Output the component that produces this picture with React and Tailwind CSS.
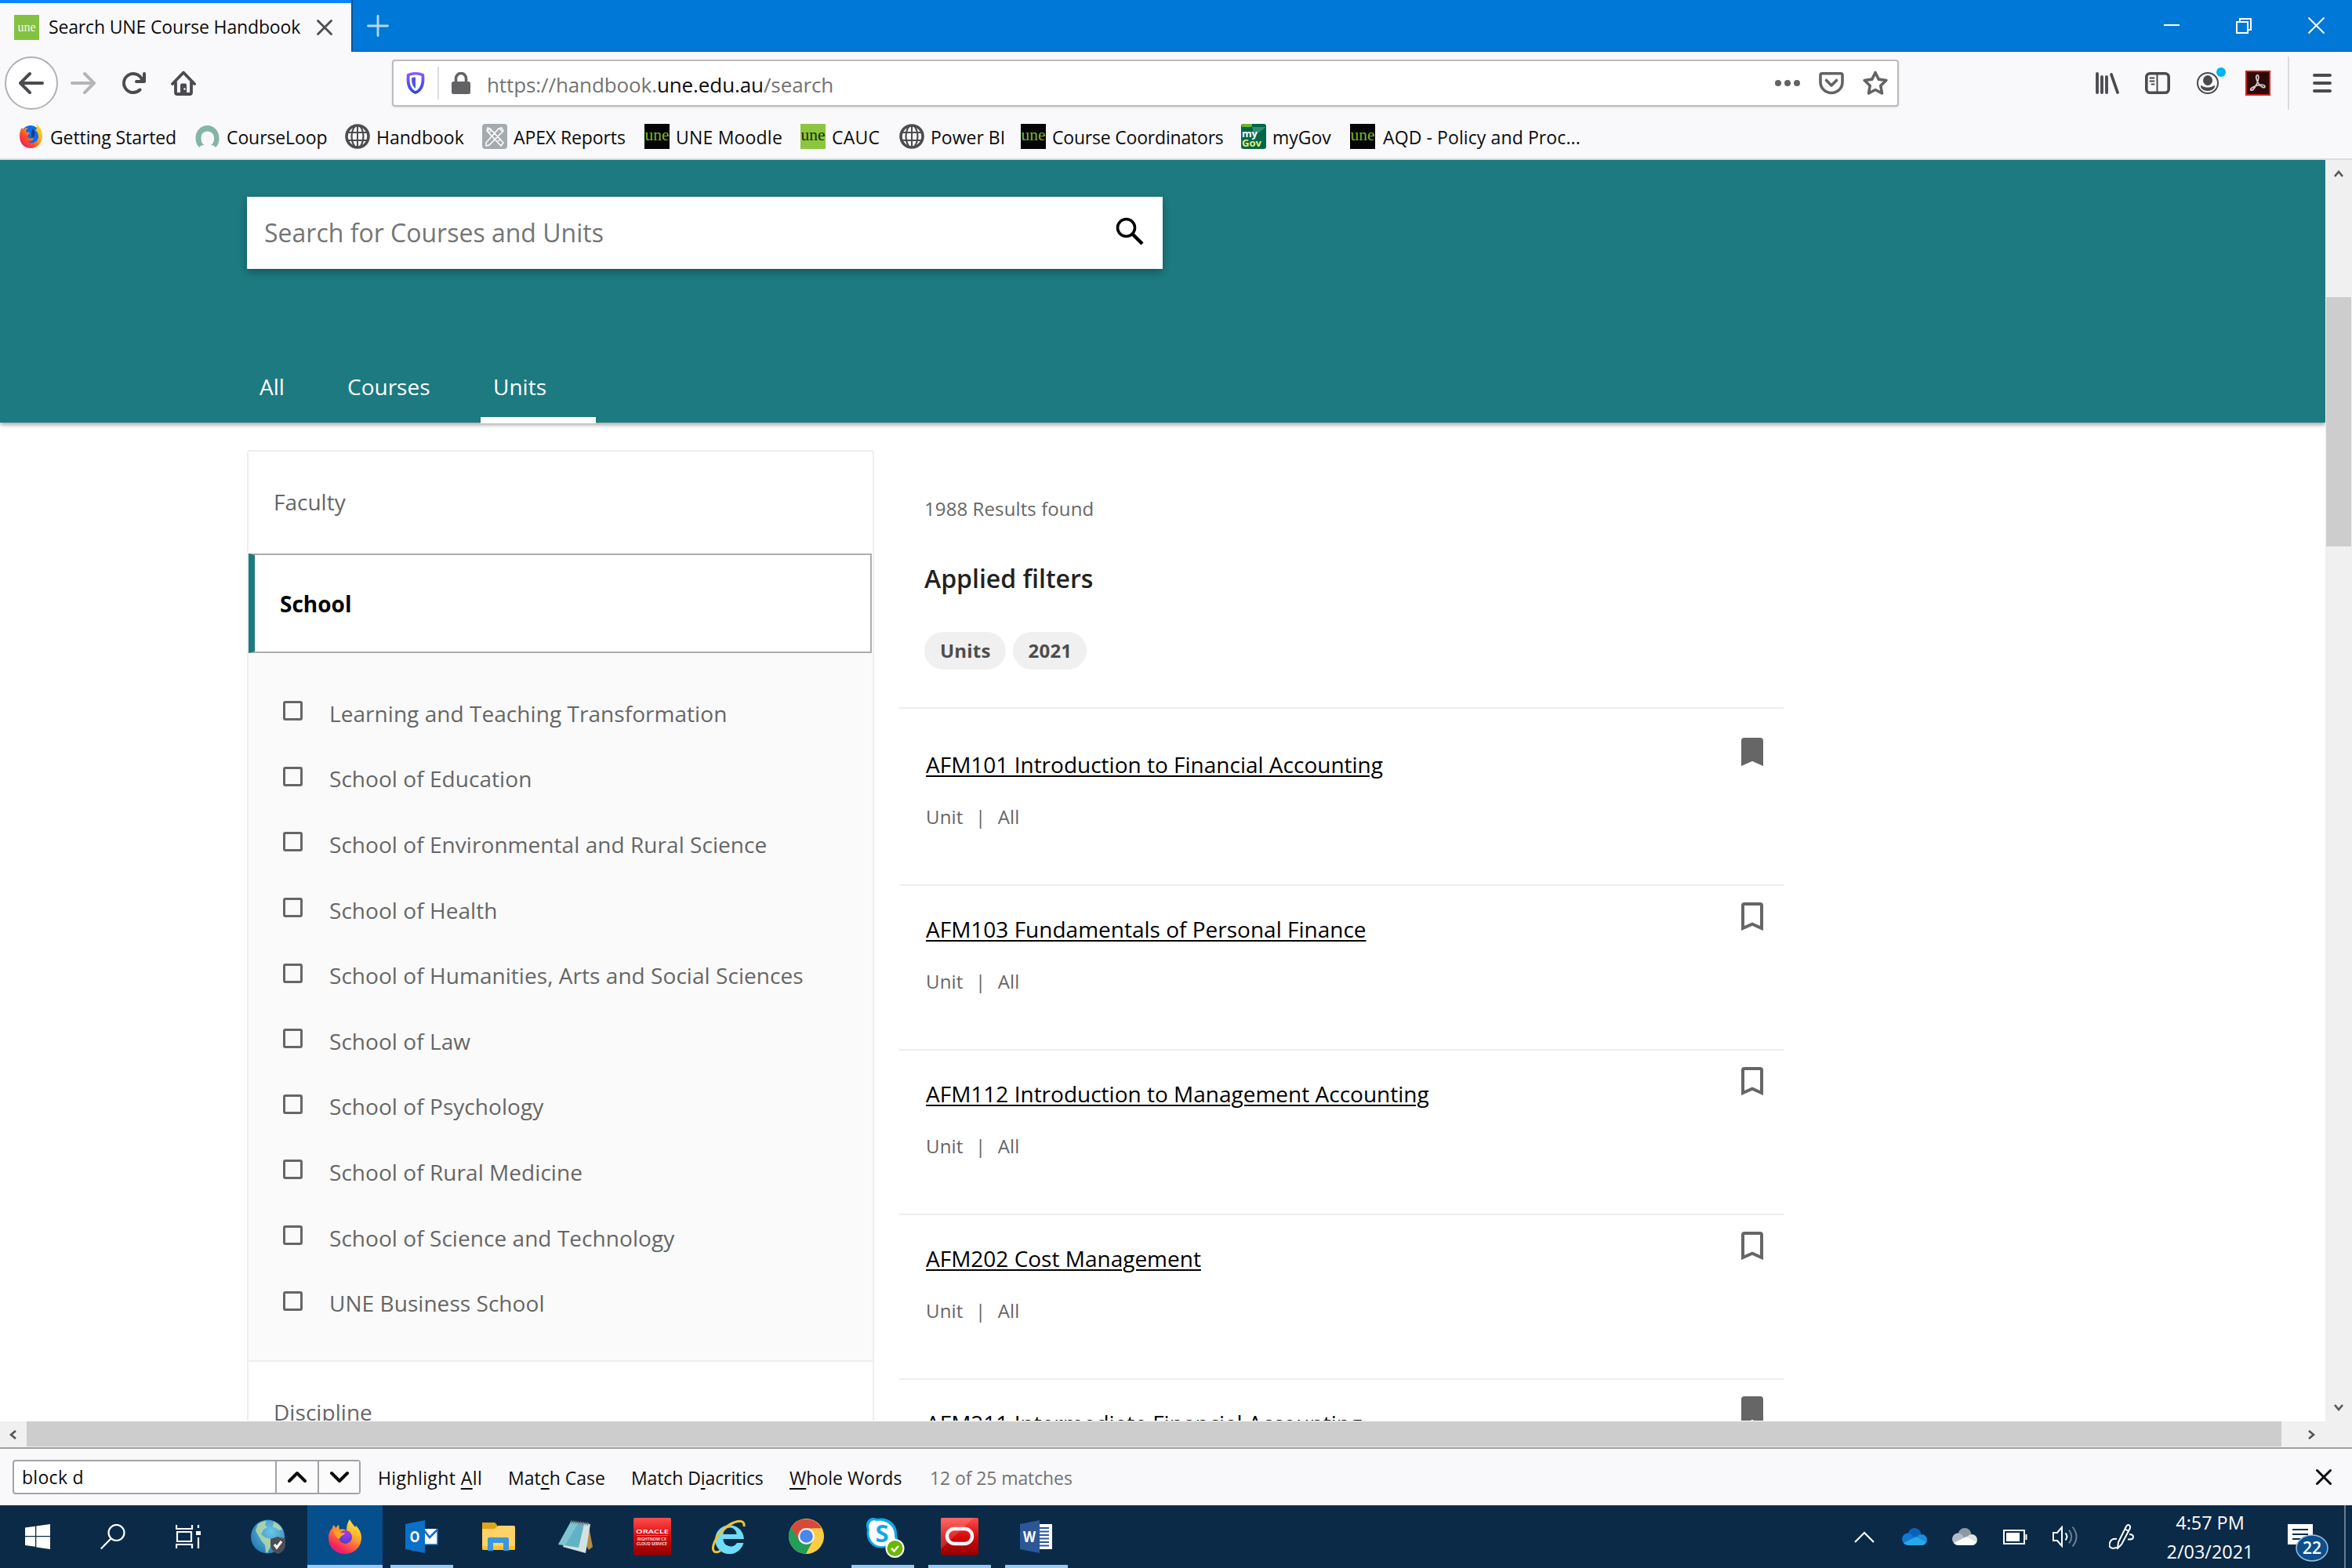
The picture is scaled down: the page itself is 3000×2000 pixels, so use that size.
import React from "react";

const bookmarks = [
    { label: "Getting Started", icon: "firefox", width: "w-[225px]", text: "tracking-[-0.1px]" },
    { label: "CourseLoop", icon: "loop", width: "w-[191px]", text: "tracking-[-0.1px]" },
    { label: "Handbook", icon: "globe", width: "w-[175px]", text: "" },
    { label: "APEX Reports", icon: "apex", width: "w-[207px]", text: "tracking-[-0.1px]" },
    { label: "UNE Moodle", icon: "une", width: "w-[199px]", text: "tracking-[0.2px]" },
    { label: "CAUC", icon: "uneGreen", width: "w-[126px]", text: "tracking-[0.2px]" },
    { label: "Power BI", icon: "globe", width: "w-[155px]", text: "" },
    { label: "Course Coordinators", icon: "une", width: "w-[281px]", text: "tracking-[-0.2px]" },
    { label: "myGov", icon: "mygov", width: "w-[139px]", text: "" },
    { label: "AQD - Policy and Proc...", icon: "une", width: "w-[300px]", text: "ml-[2px] tracking-[0.1px]" },
];

const schools = [
    "Learning and Teaching Transformation",
    "School of Education",
    "School of Environmental and Rural Science",
    "School of Health",
    "School of Humanities, Arts and Social Sciences",
    "School of Law",
    "School of Psychology",
    "School of Rural Medicine",
    "School of Science and Technology",
    "UNE Business School",
];

const units = [
    { title: "AFM101 Introduction to Financial Accounting", saved: true },
    { title: "AFM103 Fundamentals of Personal Finance", saved: false },
    { title: "AFM112 Introduction to Management Accounting", saved: false },
    { title: "AFM202 Cost Management", saved: false },
    { title: "AFM211 Intermediate Financial Accounting", saved: true },
];

/* ---------- favicons ---------- */

function UneIcon({ bg, fg, size = 15 }) {
    return (
        <svg className="w-8 h-8 shrink-0" viewBox="0 0 32 32">
            <rect width="32" height="32" fill={bg} />
            <text x="16" y="21" textAnchor="middle" fontFamily="Liberation Serif, serif" fontSize={size} textLength={size > 16 ? 31 : 23} lengthAdjust="spacingAndGlyphs" fill={fg}>
                une
            </text>
        </svg>
    );
}

function FirefoxOld() {
    return (
        <svg className="w-8 h-8 shrink-0" viewBox="0 0 32 32">
            <defs>
                <linearGradient id="ffo" x1="1" y1="0" x2="0" y2="1">
                    <stop offset="0" stopColor="#ffe226" />
                    <stop offset=".35" stopColor="#ffb31c" />
                    <stop offset=".65" stopColor="#ff4a2a" />
                    <stop offset="1" stopColor="#d9117f" />
                </linearGradient>
            </defs>
            <circle cx="15" cy="14" r="12" fill="#0a6cf0" />
            <path d="M22 0c4 3 8 8 8 15 0 9-6 16-14.500 16S1 25 1 16c0-5 1-9 3-11l2 2c2-2 4-2 6-2-2 1-3 3-3 5 2 1 4 0 5 2-1 2-3 2-3 4 1 2 3 3 5 2 2 0 3 1 3 1-2 3-6 4-8 3 4 5 13 2 14-5 0-4-1-7-4-9 3-2 2-6 1-8z" fill="url(#ffo)" />
            <path d="M17 6c3 2 4 5 3 9-1 2-3 3-5 3 2-2 1-3 1-5s1-4 1-7z" fill="#123a8c" />
        </svg>
    );
}

function GlobeIcon() {
    return (
        <svg className="w-8 h-8 shrink-0" viewBox="0 0 32 32" fill="none" stroke="#4d4d4f">
            <circle cx="16" cy="16" r="14" strokeWidth="3.600" />
            <ellipse cx="16" cy="16" rx="7.500" ry="14" strokeWidth="2.200" />
            <path d="M16 2v28M3 11h26M3 21h26" strokeWidth="2" />
        </svg>
    );
}

function Favicon({ name }) {
    switch (name) {
        case "firefox":
            return <FirefoxOld />;
        case "globe":
            return <GlobeIcon />;
        case "une":
            return <UneIcon bg="#050505" fg="#7ab42c" size={21} />;
        case "uneGreen":
            return <UneIcon bg="#8cc63f" fg="#1d2b08" size={21} />;
        case "loop":
            return (
                <svg className="w-8 h-8 shrink-0" viewBox="0 0 32 32">
                    <path d="M5 30C2 27 0.500 23 0.500 18 0.500 9 7 2 15.500 2s15 7 15 16c0 5-1 9-4.500 12-1.500-2-3.500-3-6-3 3-1.500 4-5 4-9 0-5-3.500-8.500-8.500-8.500S7.500 13 7.500 18c0 4 1 7.500 4 9-2.500 0-5 1-6.500 3z" fill="#85b5a4" />
                </svg>
            );
        case "apex":
            return (
                <svg className="w-8 h-8 shrink-0" viewBox="0 0 32 32" fill="none" stroke="#fff" strokeWidth="1.500">
                    <rect width="32" height="32" rx="4" fill="#a5aaae" stroke="none" />
                    <path d="M7 5l3 1 17 18-3 4L6 9zM25 5l-4 1L5 24l0 4 4-1L27 9zM10 6L6 10M22 6l4 4M24 28l3-4M12 8l-4 4M20 22l4-3" />
                </svg>
            );
        case "mygov":
            return (
                <svg className="w-8 h-8 shrink-0" viewBox="0 0 32 32">
                    <rect width="32" height="32" rx="3" fill="#02664b" />
                    <path d="M14 4h18L17 15z" fill="#318c70" />
                    <path d="M1 0h13v2q0 2-2 2H1z" fill="#6fb52c" />
                    <text x="1" y="17" fontFamily="Open Sans, sans-serif" fontWeight="700" fontSize="13" textLength="20" fill="#fff">my</text>
                    <text x="1" y="29" fontFamily="Open Sans, sans-serif" fontWeight="700" fontSize="13" textLength="25" lengthAdjust="spacingAndGlyphs" fill="#e3ec74">Gov</text>
                </svg>
            );
        default:
            return null;
    }
}

/* ---------- browser chrome ---------- */

function TitleBar() {
    return (
        <div className="flex h-[66px] bg-[#0078d7]">
            <div className="flex items-center w-[448px] h-[66px] bg-[#f9f9fb] border-t-4 border-[#0a84ff] pl-[18px]">
                <UneIcon bg="#84c142" fg="#f2f8e8" size={16} />
                <span className="ml-3 w-[332px] text-[23px] tracking-[-0.15px] text-[#0c0c0d] whitespace-nowrap -mt-[2px]">Search UNE Course Handbook</span>
                <svg className="w-5 h-5 ml-[10px]" viewBox="0 0 20 20" stroke="#4a4a4f" strokeWidth="2.800" strokeLinecap="round">
                    <path d="M1.500 1.500l17 17M18.500 1.500l-17 17" />
                </svg>
            </div>
            <div className="flex flex-1 items-center border-l-2 border-b border-[#00539a]">
                <svg className="w-7 h-7 ml-[18px]" viewBox="0 0 28 28" stroke="#b5daf8" strokeWidth="2.800" strokeLinecap="round">
                    <path d="M14 1.500v25M1.500 14h25" />
                </svg>
                <div className="flex ml-auto mr-[35px] gap-[72px] items-center">
                    <svg className="w-5 h-5" viewBox="0 0 20 20" stroke="#fff" strokeWidth="2"><path d="M0 9h20" /></svg>
                    <svg className="w-5 h-5" viewBox="0 0 20 20" stroke="#fff" strokeWidth="2" fill="none"><path d="M1 5h14v14H1zM5 5V1h14v14h-4" /></svg>
                    <svg className="w-[21px] h-[21px]" viewBox="0 0 21 21" stroke="#fff" strokeWidth="2"><path d="M.5.5l20 20M20.500.5l-20 20" /></svg>
                </div>
            </div>
        </div>
    );
}

const arrowPath = "M15 7H3.414l4.293-4.293a1 1 0 0 0-1.414-1.414l-6 6a1 1 0 0 0 0 1.414l6 6a1 1 0 0 0 1.414-1.414L3.414 9H15a1 1 0 0 0 0-2z";

function UrlBar() {
    return (
        <div className="flex items-center ml-[234px] w-[1922px] h-[60px] bg-white border-2 border-[#bcbcbe] rounded shadow-sm pl-4 pr-3">
            <svg className="w-6 h-7" viewBox="0 0 24 28">
                <defs>
                    <linearGradient id="shield" x1="0" y1="0" x2="0" y2="1">
                        <stop offset="0" stopColor="#9059ff" />
                        <stop offset="1" stopColor="#2b4bc6" />
                    </linearGradient>
                </defs>
                <path d="M12 0c5 0 8 1 11 2.500C24.500 15 22 24.500 12 28 2 24.500-.5 15 1 2.500 4 1 7 0 12 0zm0 3.500c-3 0-5.500.5-7.500 1.500C4 14 5.500 21 12 24.300 18.500 21 20 14 19.500 5c-2-1-4.500-1.500-7.500-1.500z" fill="url(#shield)" />
                <path d="M12 6.500v14.500c-4-3-5-7.500-5-13.500 1.500-.7 3-1 5-1z" fill="#5554dd" />
            </svg>
            <div className="w-[2px] h-[42px] bg-[#dedee0] ml-4" />
            <svg className="w-[26px] h-7 ml-[15px]" viewBox="0 0 26 28" fill="#636365">
                <rect x="1" y="12" width="24" height="16" rx="2.500" />
                <path d="M6.500 14V8a6.500 6.500 0 0 1 13 0v6" fill="none" stroke="#636365" strokeWidth="3.600" />
            </svg>
            <span className="ml-5 mt-1 text-[26px] tracking-[-0.1px] text-[#737373] whitespace-nowrap">
                https://handbook.<span className="text-[#0c0c0d]">une.edu.au</span>/search
            </span>
            <div className="flex items-center ml-auto gap-6">
                <svg className="w-8 h-8" viewBox="0 0 32 32" fill="#636365">
                    <circle cx="4" cy="16" r="4" /><circle cx="16" cy="16" r="4" /><circle cx="28" cy="16" r="4" />
                </svg>
                <svg className="w-8 h-8" viewBox="0 0 32 32" fill="none" stroke="#636365" strokeWidth="3.600" strokeLinecap="round" strokeLinejoin="round">
                    <path d="M4 3.800h24q2 0 2 2V15a14 13.500 0 0 1-28 0V5.800q0-2 2-2z" />
                    <path d="M9.500 12.500l6.500 6.500 6.500-6.500" />
                </svg>
                <svg className="w-8 h-8" viewBox="0 0 32 32" fill="none" stroke="#636365" strokeWidth="3.600" strokeLinejoin="round">
                    <path d="M16 2.500l4.200 8.600 9.600 1.400-7 6.700 1.700 9.800L16 24.500 7.500 29l1.700-9.800-7-6.700 9.600-1.400z" />
                </svg>
            </div>
        </div>
    );
}

function NavBar() {
    return (
        <div className="flex items-center h-20 bg-[#f9f9fb] pl-[6px] pr-[6px]">
            <div className="flex items-center justify-center w-[68px] h-[68px] rounded-full bg-white border-2 border-[#b1b1b3]">
                <svg className="w-8 h-8" viewBox="0 0 16 16" fill="#4a4a4f"><path d={arrowPath} /></svg>
            </div>
            <div className="flex w-16 justify-center">
                <svg className="w-8 h-8 rotate-180" viewBox="0 0 16 16" fill="#b5b5b8"><path d={arrowPath} /></svg>
            </div>
            <div className="flex w-16 justify-center">
                <svg className="w-8 h-8" viewBox="0 0 16 16" fill="#4a4a4f">
                    <path d="M15 1a1 1 0 0 0-1 1v2.418A6.995 6.995 0 1 0 8 15a6.954 6.954 0 0 0 4.950-2.050 1 1 0 0 0-1.414-1.414A5.019 5.019 0 1 1 12.549 6H10a1 1 0 0 0 0 2h5a1 1 0 0 0 1-1V2a1 1 0 0 0-1-1z" />
                </svg>
            </div>
            <div className="flex w-16 justify-center">
                <svg className="w-8 h-8" viewBox="0 0 32 32" fill="none" stroke="#4a4a4f" strokeWidth="3.800" strokeLinecap="round" strokeLinejoin="round">
                    <path d="M2 17L16 2.500 30 17M6 15v13q0 2 2 2h16q2 0 2-2V15" />
                    <path d="M12 30V18.500q0-2 2-2h4q2 0 2 2V30z" fill="#4a4a4f" stroke="none" />
                    <circle cx="17.500" cy="23.500" r="1.200" fill="#f9f9fb" stroke="none" />
                </svg>
            </div>
            <UrlBar />
            <div className="flex items-center ml-auto">
                <div className="flex w-16 justify-center">
                    <svg className="w-8 h-8" viewBox="0 0 32 32" stroke="#4a4a4f" strokeWidth="3.800" strokeLinecap="round">
                        <path d="M3 4v24M9 8v20M15 8v20M21 5l8 23" />
                    </svg>
                </div>
                <div className="flex w-16 justify-center">
                    <svg className="w-8 h-8" viewBox="0 0 32 32" fill="none" stroke="#4a4a4f" strokeWidth="3.600" strokeLinecap="round">
                        <rect x="1.800" y="3.800" width="28.400" height="24.400" rx="4.500" />
                        <path d="M15.500 4v24M6.500 9.500h5M6.500 13.500h5M8.500 17.500h3" strokeWidth="2" />
                    </svg>
                </div>
                <div className="flex w-16 justify-center relative">
                    <svg className="w-8 h-8" viewBox="0 0 32 32" fill="#4a4a4f">
                        <circle cx="16" cy="16" r="13" fill="none" stroke="#4a4a4f" strokeWidth="2" />
                        <ellipse cx="16" cy="12.500" rx="6" ry="6.500" />
                        <path d="M7 19c2 0 3 2.500 9 2.500S23 19 25 19c.5 4-4 7-9 7s-9.500-3-9-7z" />
                    </svg>
                    <div className="absolute right-[9px] -top-[4px] w-3 h-3 rounded-full bg-[#00b3f4]" />
                </div>
                <div className="flex w-16 justify-center">
                    <svg className="w-8 h-8" viewBox="0 0 32 32">
                        <rect x="1" y="1" width="30" height="30" fill="#2d0a0a" stroke="#c9231a" strokeWidth="2" />
                        <path d="M15 6c3-1 2 7-1 12-2 4-5 8-7 7s3-5 8-6c5-1.500 10-1 10 1.500s-5 1-8-3.500c-3-5-4.500-10-2-11z" fill="none" stroke="#d8cccc" strokeWidth="1.700" />
                    </svg>
                </div>
                <div className="w-[2px] h-[68px] bg-[#dcdcdf] ml-[6px]" />
                <div className="flex w-16 justify-center ml-[10px]">
                    <svg className="w-6 h-6" viewBox="0 0 24 24" stroke="#4a4a4f" strokeWidth="4" strokeLinecap="round">
                        <path d="M2 2h20M2 12h20M2 22h20" />
                    </svg>
                </div>
            </div>
        </div>
    );
}

function BookmarksBar() {
    return (
        <div className="flex items-center h-[58px] bg-[#f9f9fb] border-b-2 border-[#dcdcde] pl-6">
            {bookmarks.map((b) => (
                <div key={b.label} className={`flex items-center gap-2 shrink-0 ${b.width}`}>
                    <Favicon name={b.icon} />
                    <span className={`mt-[2px] text-[23px] text-[#0c0c0d] whitespace-nowrap ${b.text}`}>{b.label}</span>
                </div>
            ))}
        </div>
    );
}

/* ---------- page ---------- */

function Header() {
    return (
        <div className="h-[335px] shrink-0 bg-[#1d7a80] pl-[315px] pt-[47px] shadow-[0_3px_5px_rgba(0,0,0,0.35)]">
            <div className="flex items-center justify-between w-[1168px] h-[92px] bg-white pl-[22px] pr-[22px] shadow-[0_4px_10px_rgba(0,0,0,0.3)]">
                <span className="text-[32px] text-[#757575]">Search for Courses and Units</span>
                <svg className="w-10 h-10 -mt-1" viewBox="0 0 40 40" fill="none" stroke="#000" strokeWidth="3.600">
                    <circle cx="15.500" cy="15.500" r="11" />
                    <path d="M23.500 23.500L36 36" strokeWidth="4.500" />
                </svg>
            </div>
            <div className="flex mt-[111px] h-[86px] text-[28px] text-white">
                <div className="px-4 pb-[9px] flex items-center w-[112px]">All</div>
                <div className="px-4 pb-[9px] flex items-center w-[186px]">Courses</div>
                <div className="px-4 pb-[1px] flex items-center w-[147px] border-b-8 border-white">Units</div>
            </div>
        </div>
    );
}

function Sidebar() {
    return (
        <div className="w-[800px] mt-[35px] border-2 border-b-0 border-[#eeeeee] rounded-t-sm text-[28px] text-[#666666]">
            <div className="flex items-center h-[130px] pl-8 pb-[2px]">Faculty</div>
            <div className="flex items-center h-[127px] mr-px border-2 border-[#adadad] border-l-8 border-l-[#1d7a80] pl-8 font-bold text-black">School</div>
            <div className="bg-[#fafafa] pt-[35px] h-[902px]">
                {schools.map((s) => (
                    <div key={s} className="flex items-center h-[83.600px] pl-[44px]">
                        <div className="w-[25px] h-[25px] border-[3px] border-[#666666] rounded-[3px] -mt-[6px]" />
                        <span className="ml-[34px] whitespace-nowrap tracking-[0.05px]">{s}</span>
                    </div>
                ))}
            </div>
            <div className="flex items-center h-[132px] border-t-2 border-[#eeeeee] pl-8 pb-[2px] tracking-[0.05px]">Discipline</div>
        </div>
    );
}

function UnitCard({ unit, first }) {
    return (
        <div className={`flex justify-between border-t-2 border-[#eeeeee] pl-[34px] pr-[26px] ${first ? "h-[226px] pt-4" : "h-[210px]"}`}>
            <div className="pt-[35px]">
                <div className="h-10 leading-10 text-[28px] text-black underline decoration-2 underline-offset-[3px] whitespace-nowrap">{unit.title}</div>
                <div className="flex items-center mt-[31px] h-8 text-2xl leading-8 text-[#666666] tracking-[0.2px]">
                    <span>Unit</span>
                    <span className="w-[44px] text-center">|</span>
                    <span>All</span>
                </div>
            </div>
            <svg className="w-7 h-9 mt-[21px]" viewBox="0 0 28 36" fill={unit.saved ? "#666666" : "none"} stroke="#666666" strokeWidth="4">
                <path d="M2 4q0-2 2-2h20q2 0 2 2v29l-12-5.300L2 33z" />
            </svg>
        </div>
    );
}

function Results() {
    return (
        <div className="w-[1128px] ml-8">
            <div className="h-[363px] pl-8 pt-[94px]">
                <div className="h-8 leading-8 text-2xl text-[#666666] tracking-[0.1px]">1988 Results found</div>
                <div className="h-12 leading-[48px] mt-[49px] text-[32px] font-semibold text-[#222222]">Applied filters</div>
                <div className="flex gap-[9px] mt-[44px]">
                    {["Units", "2021"].map((f) => (
                        <div key={f} className="flex items-center h-12 rounded-full bg-[#f0f0f0] pl-5 pr-[19px] text-2xl font-bold tracking-[0.2px] text-[#4d4d4d]">
                            {f}
                        </div>
                    ))}
                </div>
            </div>
            {units.map((u, i) => (
                <UnitCard key={u.title} unit={u} first={i === 0} />
            ))}
        </div>
    );
}

function Chevron({ className, d }) {
    return (
        <svg className={className} viewBox="0 0 12 12" fill="none" stroke="#555" strokeWidth="2.600">
            <path d={d} />
        </svg>
    );
}

function PageArea() {
    return (
        <>
            <div className="flex h-[1609px]">
                <div className="flex flex-col w-[2966px] h-[1608px] overflow-hidden bg-white">
                    <Header />
                    <div className="flex items-start pl-[315px]">
                        <Sidebar />
                        <Results />
                    </div>
                </div>
                <div className="flex flex-col items-center w-[34px] bg-[#f0f0f0]">
                    <Chevron className="w-3 h-3 mt-3" d="M1 9l5-6 5 6" />
                    <div className="mt-[151px] w-[32px] h-[318px] bg-[#cdcdcd]" />
                    <Chevron className="w-3 h-3 mt-auto mb-3" d="M1 3l5 6 5-6" />
                </div>
            </div>
            <div className="flex items-center h-[33px] bg-[#f0f0f0]">
                <div className="flex w-[34px] justify-center"><Chevron className="w-3 h-3" d="M9 1L3 6l6 5" /></div>
                <div className="w-[2876px] h-[32px] mb-px bg-[#cdcdcd]" />
                <Chevron className="w-3 h-3 ml-[32px]" d="M3 1l6 5-6 5" />
            </div>
        </>
    );
}

function FindBar() {
    return (
        <div className="flex items-center h-[74px] bg-[#f9f9fb] border-t-2 border-[#a0a0a0] pl-4 text-[23px] text-[#0c0c0d] whitespace-nowrap">
            <div className="flex w-[444px] h-11 bg-white border-2 border-[#a3a3a5] rounded">
                <div className="flex items-center w-[333px] pl-[10px] pt-px tracking-[0.3px]">block d</div>
                <div className="flex items-center justify-center w-[54px] border-l-2 border-[#a3a3a5] bg-[#fbfbfc]">
                    <svg className="w-6 h-4" viewBox="0 0 24 16" fill="none" stroke="#0c0c0d" strokeWidth="4" strokeLinecap="round" strokeLinejoin="round"><path d="M2 13L12 3l10 10" /></svg>
                </div>
                <div className="flex flex-1 items-center justify-center border-l-2 border-[#a3a3a5] bg-[#fbfbfc]">
                    <svg className="w-6 h-4" viewBox="0 0 24 16" fill="none" stroke="#0c0c0d" strokeWidth="4" strokeLinecap="round" strokeLinejoin="round"><path d="M2 3l10 10L22 3" /></svg>
                </div>
            </div>
            <span className="ml-[22px] w-[166px] mt-[2px] tracking-[0.4px]">Highlight <u className="underline-offset-4 decoration-2">A</u>ll</span>
            <span className="w-[157px] mt-[2px]">Mat<u className="underline-offset-4 decoration-2">c</u>h Case</span>
            <span className="w-[202px] mt-[2px] tracking-[-0.1px]">Match D<u className="underline-offset-4 decoration-2">i</u>acritics</span>
            <span className="w-[179px] mt-[2px]"><u className="underline-offset-4 decoration-2">W</u>hole Words</span>
            <span className="mt-[2px] text-[#737373] tracking-[-0.1px]">12 of 25 matches</span>
            <svg className="w-5 h-5 ml-auto mr-[26px]" viewBox="0 0 20 20" stroke="#0c0c0d" strokeWidth="3" strokeLinecap="round">
                <path d="M1.500 1.500l17 17M18.500 1.500l-17 17" />
            </svg>
        </div>
    );
}

/* ---------- taskbar ---------- */

function TaskSlot({ children, open, active }) {
    return (
        <div className="w-[98px] h-20 flex justify-center shrink-0">
            <div className={`flex flex-col items-center h-20 ${active ? "w-24 bg-[#054f8c]" : "w-20"}`}>
                <div className="flex-1 flex items-center justify-center pt-[3px]">{children}</div>
                <div className={`h-1 w-full ${open || active ? "bg-[#99c9f0]" : ""}`} />
            </div>
        </div>
    );
}

function OfficeIcon({ letter, color, children }) {
    return (
        <svg className="w-[42px] h-[42px]" viewBox="0 0 42 42">
            {children}
            <path d="M0 5l25-5v42L0 37z" fill={color} />
            <text x="12" y="28" textAnchor="middle" fontFamily="Open Sans, sans-serif" fontWeight="700" fontSize="19" textLength={letter === "W" ? 16 : 13} lengthAdjust="spacingAndGlyphs" fill="#fff">
                {letter}
            </text>
        </svg>
    );
}

function TaskIcons() {
    return (
        <>
            <div className="w-24 flex justify-center">
                <svg className="w-8 h-8" viewBox="0 0 32 32" fill="#fff"><path d="M0 4.500L13 2.700V15H0zM14.300 2.500L32 0v15H14.300zM0 16.300h13v12.500L0 27zM14.300 16.300H32V32l-17.700-2.500z" /></svg>
            </div>
            <div className="w-24 flex justify-center">
                <svg className="w-8 h-8" viewBox="0 0 32 32" fill="none" stroke="#fff" strokeWidth="2.200"><circle cx="20.500" cy="11" r="10" /><path d="M13.500 18.500L.8 31.500" /></svg>
            </div>
            <div className="w-24 flex justify-center">
                <svg className="w-8 h-8" viewBox="0 0 32 32" fill="none" stroke="#fff" strokeWidth="2.200">
                    <path d="M1 1v5h20V1M1 31v-5h20v5M2 10h18v12H2zM29 1v4M29 17v14" />
                    <rect x="26" y="9" width="6" height="5" fill="#fff" stroke="none" />
                </svg>
            </div>
        </>
    );
}

function AppIcons() {
    return (
        <div className="flex ml-[5px]">
            <TaskSlot>
                <svg className="w-11 h-11" viewBox="0 0 44 44">
                    <defs>
                        <radialGradient id="earth" cx=".6" cy=".35" r=".8">
                            <stop offset="0" stopColor="#6cc6ea" />
                            <stop offset="1" stopColor="#1c6fa8" />
                        </radialGradient>
                    </defs>
                    <circle cx="21.500" cy="22" r="21.500" fill="url(#earth)" />
                    <path d="M9 6c4-3 8-4 11-4l-2 5 3 3-5 3-3 6 5 4 7 2 3 3-4 9-3 6-2-1-1-9-4-5-5-8-3-6zM29 3c5 2 9 6 11 10l-4 1-4-3-4-1z" fill="#b9d9a5" opacity=".85" />
                    <path d="M25 25l9-3 10 3v7c0 6-4 10-9.500 12C29 42 25 38 25 32z" fill="#4b4f54" />
                    <path d="M30 32l3 4 6-8" fill="none" stroke="#fff" strokeWidth="3" />
                </svg>
            </TaskSlot>
            <TaskSlot active>
                <svg className="w-[44px] h-[44px]" viewBox="0 0 44 44">
                    <defs>
                        <linearGradient id="ffn" x1=".85" y1="0" x2=".25" y2="1">
                            <stop offset="0" stopColor="#fff04e" />
                            <stop offset=".35" stopColor="#ffb52e" />
                            <stop offset=".6" stopColor="#ff6a3a" />
                            <stop offset=".85" stopColor="#f4245f" />
                            <stop offset="1" stopColor="#e01890" />
                        </linearGradient>
                        <radialGradient id="ffp" cx=".6" cy=".2" r=".9">
                            <stop offset="0" stopColor="#a13df0" />
                            <stop offset="1" stopColor="#4a3ec8" />
                        </radialGradient>
                    </defs>
                    <path d="M28 0c2 4 5 7 7 10l1-2c4 4 7 9 7 15 0 12-9 21-21 21S1 35 1 24c0-6 2-10 5-13l1-4 4 4c0-1 1-3 3-4l1 6c3-1 7 0 9 1 0-5 1-10 4-14z" fill="url(#ffn)" />
                    <circle cx="22.500" cy="22.500" r="8.500" fill="url(#ffp)" />
                    <path d="M7 14c5-1 7 1 9 3h6c0 3-4 3-5 5-2 1-1 3-3 3-3-2-6-6-7-11z" fill="#ffa229" />
                </svg>
            </TaskSlot>
            <TaskSlot open>
                <OfficeIcon letter="O" color="#0a70c8">
                    <path d="M22 11h19v20H22z" fill="#fff" />
                    <path d="M24 13l7 9 10-10" fill="none" stroke="#0a70c8" strokeWidth="2.500" />
                    <path d="M22 31h19V11" fill="none" stroke="#0a70c8" strokeWidth="1.500" />
                </OfficeIcon>
            </TaskSlot>
            <TaskSlot>
                <svg className="w-[42px] h-[36px]" viewBox="0 0 42 36">
                    <path d="M0 0h16l3 3v6H0z" fill="#e0a315" />
                    <path d="M0 8h16l4-4h20q2 0 2 2v27q0 2-2 2H2q-2 0-2-2z" fill="#fdd367" />
                    <path d="M0 30h42v3q0 2-2 2H2q-2 0-2-2z" fill="#fac22f" />
                    <path d="M7 36V21q0-2 2-2h23q2 0 2 2v15h-7V26H14v10z" fill="#3a96dd" />
                </svg>
            </TaskSlot>
            <TaskSlot>
                <svg className="w-[44px] h-[42px]" viewBox="0 0 44 42">
                    <path d="M38 3l6 31-5 4-6-10z" fill="#b38b47" />
                    <path d="M16 2l25 3-6 37L6 34z" fill="#d5e0e2" />
                    <path d="M16 2l17 3-7 30L0 31z" fill="#5fb3c4" />
                    <path d="M16 2l10 1L9 32l-9-1z" fill="#8dccd8" opacity=".7" />
                    <path d="M16 2l24 3" stroke="#777" strokeWidth="4" strokeDasharray="1.500 1.500" />
                </svg>
            </TaskSlot>
            <TaskSlot>
                <svg className="w-12 h-12" viewBox="0 0 48 48">
                    <defs>
                        <linearGradient id="orc" x1="0" y1="0" x2="0" y2="1">
                            <stop offset="0" stopColor="#ff4d4d" />
                            <stop offset=".5" stopColor="#d80b0b" />
                            <stop offset="1" stopColor="#8e0000" />
                        </linearGradient>
                    </defs>
                    <rect width="48" height="48" rx="2" fill="url(#orc)" />
                    <g fontFamily="Open Sans, sans-serif" fill="#fff" fontWeight="600">
                        <text x="3" y="19.500" fontSize="7.500" textLength="42" lengthAdjust="spacingAndGlyphs">ORACLE</text>
                        <text x="5" y="28.500" fontSize="4.500" textLength="37" lengthAdjust="spacingAndGlyphs">RIGHTNOW CX</text>
                        <text x="4" y="35" fontSize="4.500" textLength="39" lengthAdjust="spacingAndGlyphs">CLOUD SERVICE</text>
                    </g>
                    <path d="M4 22.500h40" stroke="#f5a0a0" strokeWidth=".6" />
                </svg>
            </TaskSlot>
            <TaskSlot>
                <svg className="w-11 h-11" viewBox="0 0 44 44" fill="none">
                    <path d="M40.500 25H14.500a9.500 9.500 0 0 0 17.500 5h8.500A18.500 18.500 0 1 1 41 25z" fill="#6fdcf9" />
                    <path d="M14.500 19h17a8.500 8.500 0 0 0-17 0z" fill="#0b2a47" />
                    <path d="M41 9C42 3 37 0 28 4 16 9 5 22 2 33c-2 8 2 11 9 7" stroke="#f5c12e" strokeWidth="3" />
                </svg>
            </TaskSlot>
            <TaskSlot>
                <svg className="w-[45px] h-[45px]" viewBox="0 0 45 45">
                    <circle cx="22.500" cy="22.500" r="22.500" fill="#fccd44" />
                    <path d="M3 11.500A22.500 22.500 0 0 1 42 12.500H22.500L13 28z" fill="#d9483b" />
                    <path d="M3 11.300A22.500 22.500 0 0 0 22 45l9.500-17.500h-18z" fill="#249d58" />
                    <path d="M42 12.500A22.500 22.500 0 0 1 22 45l10-18V12.500z" fill="#fccd44" />
                    <circle cx="22.500" cy="22.500" r="10.500" fill="#f5f5f5" />
                    <circle cx="22.500" cy="22.500" r="8.300" fill="#4a86ec" />
                </svg>
            </TaskSlot>
            <TaskSlot open>
                <svg className="w-[51px] h-[51px] mt-[3px] ml-1" viewBox="0 0 51 51">
                    <path d="M3 15C-1 5 7-3 15 1c14-3 27 6 26 21 4 9-3 18-12 15C13 43 0 31 3 15z" fill="#0fa8e8" />
                    <path d="M6 15C3 7 9 1 15 4c12-2 24 6 23 20 3 7-3 14-10 11C15 40 3 29 6 15z" fill="#fff" />
                    <text x="22" y="31" textAnchor="middle" fontFamily="Open Sans, sans-serif" fontWeight="700" fontSize="31" fill="#0fa8e8">S</text>
                    <circle cx="38.500" cy="39" r="11" fill="#6bb700" stroke="#fff" strokeWidth="2" />
                    <path d="M34 39l3.500 3.500 5.500-6.500" fill="none" stroke="#fff" strokeWidth="2.500" />
                </svg>
            </TaskSlot>
            <TaskSlot open>
                <svg className="w-12 h-12" viewBox="0 0 48 48">
                    <rect width="48" height="48" rx="2" fill="url(#orc)" />
                    <path d="M0 0h42L0 40z" fill="#fff" opacity=".15" />
                    <rect x="8" y="14" width="32" height="19" rx="9.500" fill="none" stroke="#f4f4f4" strokeWidth="4.500" />
                </svg>
            </TaskSlot>
            <TaskSlot open>
                <OfficeIcon letter="W" color="#2b5797">
                    <path d="M22 5h19v32H22z" fill="#fff" />
                    <path d="M25 10h12M25 14.500h12M25 19h12M25 23.500h12M25 28h12M25 32.500h12" stroke="#2b5797" strokeWidth="2.200" />
                </OfficeIcon>
            </TaskSlot>
        </div>
    );
}

function CloudIcon({ back, left, front, right }) {
    return (
        <svg className="w-8 h-[22px]" viewBox="0 0 32 22">
            <circle cx="16" cy="8.500" r="8.500" fill={back} />
            <circle cx="7.500" cy="14" r="7.500" fill={left} />
            <circle cx="25" cy="15" r="7" fill={right} />
            <path d="M2 19L18 11l13 7q-2 4-6 4H8q-4 0-6-3z" fill={front} />
        </svg>
    );
}

function Tray() {
    return (
        <div className="flex items-center ml-auto h-20">
            <div className="w-16 flex justify-center">
                <svg className="w-[26px] h-[15px]" viewBox="0 0 26 15" fill="none" stroke="#fff" strokeWidth="2.200"><path d="M1 14L13 2l12 12" /></svg>
            </div>
            <div className="w-16 flex justify-center"><CloudIcon back="#0a62b8" left="#0f78d4" right="#1790df" front="#28a8ea" /></div>
            <div className="w-16 flex justify-center"><CloudIcon back="#8d99a3" left="#b4bcc3" right="#dfe3e6" front="#ffffff" /></div>
            <div className="w-16 flex justify-center">
                <svg className="w-[31px] h-[19px]" viewBox="0 0 31 19" fill="none" stroke="#fff" strokeWidth="2">
                    <path d="M1 1h26v17H1z" /><path d="M5 5h15v9H5z" fill="#fff" /><path d="M29.500 6v7" />
                </svg>
            </div>
            <div className="w-16 flex justify-center">
                <svg className="w-[33px] h-7" viewBox="0 0 33 28" fill="none" stroke="#fff" strokeWidth="2">
                    <path d="M1 9h5l6-7v24l-6-7H1z" />
                    <path d="M16.500 9.500q4 4.500 0 9" />
                    <path d="M21 5.500q6.500 8.500 0 17M25.500 1.500q10 12.500 0 25" stroke="#6c8093" />
                </svg>
            </div>
            <div className="w-20 flex justify-center">
                <svg className="w-8 h-8" viewBox="0 0 32 32" fill="none" stroke="#fff" strokeWidth="2">
                    <path d="M11 31l1-8L22 3q2-3 4-1.500t.5 4.500L16 26zM20 6l5 3" />
                    <path d="M10 19q-7-1-9 5t4 7l5-1M26 13q5 0 5 3.500t-7 3" />
                </svg>
            </div>
            <div className="w-[146px] text-center text-[23.400px] leading-[37px] text-white pt-[1px]">
                <div>4:57 PM</div>
                <div>2/03/2021</div>
            </div>
            <div className="w-[98px] pl-[26px]">
                <svg className="w-[52px] h-[48px] mt-[15px]" viewBox="0 0 52 48">
                    <path d="M0 0h32v26H20l-6 6v-6H0z" fill="#fff" />
                    <path d="M6 7h20M6 13h20M6 19h12" stroke="#0b2a47" strokeWidth="2.200" />
                    <ellipse cx="31" cy="30.500" rx="20" ry="16.500" fill="#0d4f8c" stroke="#9dbfdb" strokeWidth="1.500" />
                    <text x="31" y="38" textAnchor="middle" fontFamily="Open Sans, sans-serif" fontWeight="600" fontSize="21" fill="#fff">22</text>
                </svg>
            </div>
            <div className="w-[2px] h-20 bg-[#6a7b8c]" />
            <div className="w-2" />
        </div>
    );
}

export default function App() {
    return (
        <div className="w-[3000px] h-[2000px] overflow-hidden bg-white font-['Open_Sans',sans-serif]">
            <TitleBar />
            <NavBar />
            <BookmarksBar />
            <PageArea />
            <FindBar />
            <div className="flex items-center h-20 bg-[#0b2a47]">
                <TaskIcons />
                <AppIcons />
                <Tray />
            </div>
        </div>
    );
}
